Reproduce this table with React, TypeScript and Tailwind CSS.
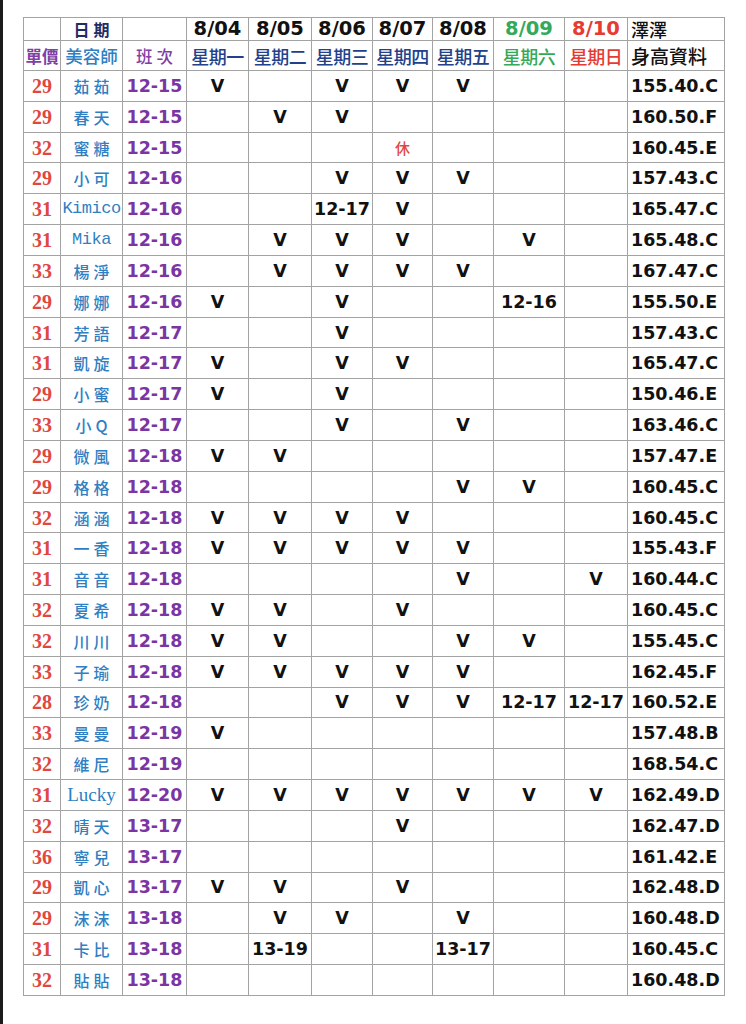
import React from "react";

type Row = [string, string, string, string[], string];

const rows: Row[] = [
  ["29", "茹茹", "12-15", ["V", "", "V", "V", "V", "", ""], "155.40.C"],
  ["29", "春天", "12-15", ["", "V", "V", "", "", "", ""], "160.50.F"],
  ["32", "蜜糖", "12-15", ["", "", "", "休", "", "", ""], "160.45.E"],
  ["29", "小可", "12-16", ["", "", "V", "V", "V", "", ""], "157.43.C"],
  ["31", "Kimico", "12-16", ["", "", "12-17", "V", "", "", ""], "165.47.C"],
  ["31", "Mika", "12-16", ["", "V", "V", "V", "", "V", ""], "165.48.C"],
  ["33", "楊淨", "12-16", ["", "V", "V", "V", "V", "", ""], "167.47.C"],
  ["29", "娜娜", "12-16", ["V", "", "V", "", "", "12-16", ""], "155.50.E"],
  ["31", "芳語", "12-17", ["", "", "V", "", "", "", ""], "157.43.C"],
  ["31", "凱旋", "12-17", ["V", "", "V", "V", "", "", ""], "165.47.C"],
  ["29", "小蜜", "12-17", ["V", "", "V", "", "", "", ""], "150.46.E"],
  ["33", "小Q", "12-17", ["", "", "V", "", "V", "", ""], "163.46.C"],
  ["29", "微風", "12-18", ["V", "V", "", "", "", "", ""], "157.47.E"],
  ["29", "格格", "12-18", ["", "", "", "", "V", "V", ""], "160.45.C"],
  ["32", "涵涵", "12-18", ["V", "V", "V", "V", "", "", ""], "160.45.C"],
  ["31", "一香", "12-18", ["V", "V", "V", "V", "V", "", ""], "155.43.F"],
  ["31", "音音", "12-18", ["", "", "", "", "V", "", "V"], "160.44.C"],
  ["32", "夏希", "12-18", ["V", "V", "", "V", "", "", ""], "160.45.C"],
  ["32", "川川", "12-18", ["V", "V", "", "", "V", "V", ""], "155.45.C"],
  ["33", "子瑜", "12-18", ["V", "V", "V", "V", "V", "", ""], "162.45.F"],
  ["28", "珍奶", "12-18", ["", "", "V", "V", "V", "12-17", "12-17"], "160.52.E"],
  ["33", "曼曼", "12-19", ["V", "", "", "", "", "", ""], "157.48.B"],
  ["32", "維尼", "12-19", ["", "", "", "", "", "", ""], "168.54.C"],
  ["31", "Lucky", "12-20", ["V", "V", "V", "V", "V", "V", "V"], "162.49.D"],
  ["32", "晴天", "13-17", ["", "", "", "V", "", "", ""], "162.47.D"],
  ["36", "寧兒", "13-17", ["", "", "", "", "", "", ""], "161.42.E"],
  ["29", "凱心", "13-17", ["V", "V", "", "V", "", "", ""], "162.48.D"],
  ["29", "沫沫", "13-18", ["", "V", "V", "", "V", "", ""], "160.48.D"],
  ["31", "卡比", "13-18", ["", "13-19", "", "", "13-17", "", ""], "160.45.C"],
  ["32", "貼貼", "13-18", ["", "", "", "", "", "", ""], "160.48.D"],
];

const cjk = "font-['Noto_Sans_CJK_TC','Noto_Sans_CJK_SC',sans-serif]";
const bold = "font-['DejaVu_Sans',sans-serif] font-bold";
const cell =
  "border border-[#a3a3a3] p-0 text-center align-middle whitespace-nowrap overflow-visible leading-[20px] text-[12px]";
const inner = "block leading-[20px]";

function NameCell({ name }: { name: string }) {
  const latin = /^[A-Za-z]+$/.test(name);
  if (name === "Lucky") {
    return (
      <span className={`${inner} font-['Liberation_Serif',serif] text-[19px] text-[#2f7fc2]`}>{name}</span>
    );
  }
  if (latin) {
    return (
      <span className={`${inner} font-['Liberation_Mono',monospace] text-[17px] tracking-[-0.5px] text-[#2f7fc2]`}>
        {name}
      </span>
    );
  }
  return (
    <span className={`${inner} ${cjk} text-[16px] font-medium tracking-[4px] pl-[4px] text-[#2f7fc2]`}>{name}</span>
  );
}

function DayCell({ v }: { v: string }) {
  if (v === "") return null;
  if (v === "休") {
    return <span className={`${inner} ${cjk} text-[15px] font-medium text-[#e2483d]`}>{v}</span>;
  }
  return <span className={`${inner} ${bold} text-[17.5px] text-[#111]`}>{v}</span>;
}

export default function App() {
  const dates = ["8/04", "8/05", "8/06", "8/07", "8/08", "8/09", "8/10"];
  const days = ["星期一", "星期二", "星期三", "星期四", "星期五", "星期六", "星期日"];
  const dateColor = (i: number) =>
    i === 5 ? "text-[#35a95a]" : i === 6 ? "text-[#e53b33]" : "text-[#111]";
  const dayColor = (i: number) =>
    i === 5 ? "text-[#35a95a]" : i === 6 ? "text-[#e53b33]" : "text-[#23418a]";

  return (
    <div className="flex min-h-[1024px] w-[746px] bg-white">
      <div className="w-[3px] shrink-0 bg-[#1b1b1b]" />
      <div className="pl-[20px] pt-[17px]">
        <table className="table-fixed border-collapse w-[702px]">
          <colgroup>
            <col className="w-[37px]" />
            <col className="w-[62px]" />
            <col className="w-[64px]" />
            <col className="w-[62px]" />
            <col className="w-[63px]" />
            <col className="w-[61px]" />
            <col className="w-[60px]" />
            <col className="w-[61px]" />
            <col className="w-[71px]" />
            <col className="w-[63px]" />
            <col className="w-[97px]" />
          </colgroup>
          <tbody>
            <tr className="h-[23px]">
              <td className={cell}></td>
              <td className={cell}>
                <span className={`${inner} ${cjk} text-[16px] font-bold tracking-[4px] pl-[4px] text-[#1f2d66]`}>日期</span>
              </td>
              <td className={cell}></td>
              {dates.map((d, i) => (
                <td key={d} className={cell}>
                  <span className={`${inner} ${bold} text-[19.5px] ${dateColor(i)}`}>{d}</span>
                </td>
              ))}
              <td className={`${cell} !text-left pl-[3px]`}>
                <span className={`${inner} ${cjk} text-[18px] font-medium text-[#111]`}>澤澤</span>
              </td>
            </tr>
            <tr className="h-[30px]">
              <td className={cell}>
                <span className={`${inner} ${cjk} text-[16.5px] font-bold text-[#7f3fa6]`}>單價</span>
              </td>
              <td className={cell}>
                <span className={`${inner} ${cjk} text-[17.5px] font-medium text-[#2f7fc2]`}>美容師</span>
              </td>
              <td className={cell}>
                <span className={`${inner} ${cjk} text-[16.5px] font-medium tracking-[4px] pl-[4px] text-[#7f3fa6]`}>班次</span>
              </td>
              {days.map((d, i) => (
                <td key={d} className={cell}>
                  <span className={`${inner} ${cjk} text-[18px] font-medium tracking-[-0.5px] ${dayColor(i)}`}>{d}</span>
                </td>
              ))}
              <td className={`${cell} !text-left pl-[3px]`}>
                <span className={`${inner} ${cjk} text-[19px] font-medium text-[#111]`}>身高資料</span>
              </td>
            </tr>
            {rows.map((r, idx) => (
              <tr key={idx} className="h-[30.83px]">
                <td className={cell}>
                  <span className={`${inner} font-['Liberation_Serif',serif] font-bold text-[20px] text-[#e0473d]`}>{r[0]}</span>
                </td>
                <td className={cell}>
                  <NameCell name={r[1]} />
                </td>
                <td className={cell}>
                  <span className={`${inner} ${bold} text-[17.5px] text-[#7b35a3]`}>{r[2]}</span>
                </td>
                {r[3].map((v, i) => (
                  <td key={i} className={cell}>
                    <DayCell v={v} />
                  </td>
                ))}
                <td className={`${cell} !text-left pl-[3px]`}>
                  <span className={`${inner} ${bold} text-[17.5px] text-[#111]`}>{r[4]}</span>
                </td>
              </tr>
            ))}
          </tbody>
        </table>
      </div>
    </div>
  );
}
